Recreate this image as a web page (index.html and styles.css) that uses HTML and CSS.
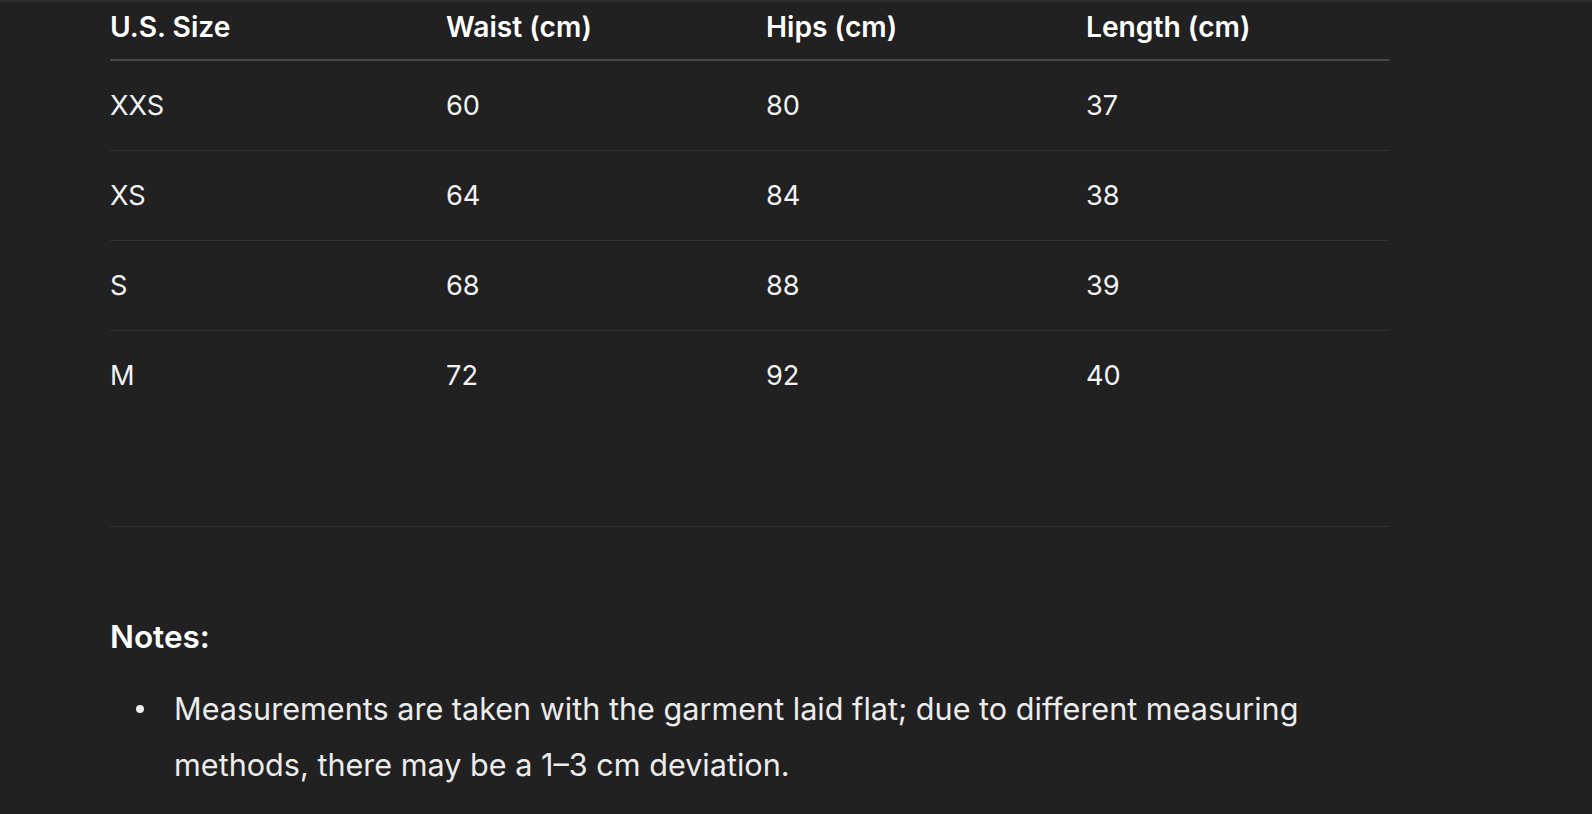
FILE: index.html
```html
<!DOCTYPE html>
<html lang="en">
<head>
<meta charset="utf-8">
<title>Size chart</title>
<link rel="stylesheet" href="styles.css">
</head>
<body>
<div class="topbar"></div>
<main class="content">
  <div class="table-wrap">
    <table class="size-table">
      <thead>
        <tr>
          <th class="c1">U.S. Size</th>
          <th class="c2">Waist (cm)</th>
          <th class="c3">Hips (cm)</th>
          <th class="c4">Length (cm)</th>
        </tr>
      </thead>
      <tbody>
        <tr><td>XXS</td><td>60</td><td>80</td><td>37</td></tr>
        <tr><td>XS</td><td>64</td><td>84</td><td>38</td></tr>
        <tr><td>S</td><td>68</td><td>88</td><td>39</td></tr>
        <tr><td>M</td><td>72</td><td>92</td><td>40</td></tr>
      </tbody>
    </table>
  </div>
  <h3 class="notes-title">Notes:</h3>
  <ul class="notes">
    <li>Measurements are taken with the garment laid flat; due to different measuring methods, there may be a 1–3 cm deviation.</li>
  </ul>
</main>
</body>
</html>
```
FILE: styles.css
```css
html, body {
  margin: 0;
  padding: 0;
  background: #212121;
  color: #ececec;
  font-family: Inter, "Noto Sans", "Liberation Sans", sans-serif;
  height: 100%;
  overflow: hidden;
}

.topbar {
  height: 2px;
  background: #2c2c2c;
}

.content {
  margin-left: 110px;
  width: 1279px;
}

.table-wrap {
  border-bottom: 1px solid #323232;
  padding-bottom: 106px;
}

.size-table {
  width: 100%;
  border-collapse: collapse;
  table-layout: fixed;
  font-size: 27.2px;
  line-height: 40px;
}

.size-table th {
  text-align: left;
  font-weight: 600;
  font-size: 28.2px;
  color: #ffffff;
  padding: 5px 0 12px 0;
  border-bottom: 2px solid #474747;
}

.size-table td {
  padding: 0;
  height: 89px;
  border-bottom: 1px solid #323232;
  color: #f2f2f2;
}

.size-table tbody tr:last-child td {
  border-bottom: none;
}

.c1 { width: 336px; }
.c2 { width: 320px; }
.c3 { width: 320px; }
.c4 { width: 303px; }

.notes-title {
  margin: 90px 0 0 0;
  font-size: 31.5px;
  line-height: 40px;
  font-weight: 600;
  color: #ffffff;
}

.notes {
  margin: 24px 0 0 0;
  padding: 0 0 0 64px;
  list-style: none;
  font-size: 30.6px;
  line-height: 56px;
}

.notes li {
  position: relative;
}

.notes li::before {
  content: "";
  position: absolute;
  left: -38px;
  top: 24px;
  width: 8px;
  height: 8px;
  border-radius: 50%;
  background: #ececec;
}
```
